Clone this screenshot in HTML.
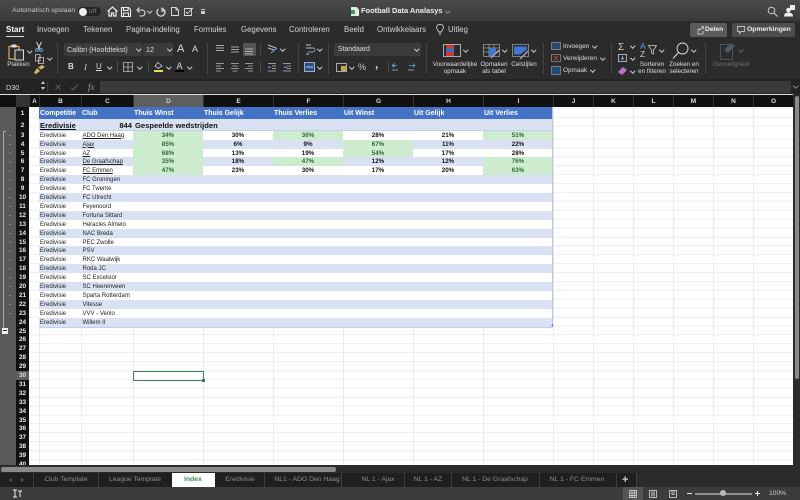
<!DOCTYPE html>
<html lang="nl"><head><meta charset="utf-8"><title>Football Data Analasys</title>
<style>
html,body{margin:0;padding:0;width:800px;height:500px;overflow:hidden;background:#2b2b2b}
#p{position:relative;width:800px;height:500px;overflow:hidden;font-family:"Liberation Sans",sans-serif;filter:blur(.35px)}
.a{position:absolute;white-space:nowrap}
.t{position:absolute;white-space:nowrap;color:#ddd;font-size:7px;line-height:10px}
.tab{position:absolute;top:24.5px;color:#d5d5d5;font-size:7.8px;line-height:10px;white-space:nowrap}
.sep{position:absolute;top:43px;width:1px;height:31px;background:#444}
.rb{position:absolute;font-size:6.3px;line-height:8px;color:#ddd;text-align:center;white-space:nowrap;transform:translateX(-50%)}
svg{position:absolute;overflow:visible}
.ch{position:absolute;width:2.5px;height:2.5px;border-right:1px solid #ccc;border-bottom:1px solid #ccc;transform:rotate(45deg)}
.ch.d{border-color:#666}
#sheet{position:absolute;left:0;top:94px;width:793px;height:371px;background:#fff;overflow:hidden;border-top:1px solid #ddd;box-sizing:border-box}
#outline{position:absolute;left:0;top:0;width:16px;height:371px;background:#5a5a5a}
#rows{position:absolute;left:16px;top:12px;width:777px;height:360px;background:#fff}
#strip{position:absolute;left:0;top:0;width:13px;height:360px;background:#111}
.v{position:absolute;top:0;width:1px;height:360px;background:#ececec}
#gl{position:absolute;left:13px;top:0;width:764px;height:360px;background:repeating-linear-gradient(to bottom,transparent 0,transparent 7.9px,#eee 7.9px,#eee 8.9px);background-position:0 23.7px}
.r{position:absolute;left:0;width:537px;height:8.9px;display:grid;grid-template-columns:13px 10px 42px 52px repeat(6,70px);font-size:6px;line-height:10px;color:#222}
.r span{overflow:visible;white-space:nowrap;display:block;height:100%}
.r span:first-child{background:transparent;color:#eee;font-weight:bold;text-align:center;font-size:6.4px}
.r span:nth-child(3){padding-left:1px}
.r span:nth-child(4){padding-left:1.5px}
.b>span:nth-child(n+3){background:#d9e1f2;box-shadow:inset 0 -1px 0 #c0cfe9}
.w>span:nth-child(n+3){background:#fff;box-shadow:inset 0 -1px 0 #c0cfe9}
.r span.n{text-align:center;font-weight:bold;color:#111;font-size:6.2px}
.r span.g{text-align:center;color:#2f6b2f;font-weight:bold;background:#cdeccf!important;font-size:6.2px}
.r u{color:#222}
.h1{position:absolute;top:0;color:#fff;font-size:7px;font-weight:bold;line-height:13.5px}
.h2{position:absolute;top:11.7px;color:#111;font-size:7.6px;font-weight:bold;line-height:13.5px}
#hd{position:absolute;left:0;top:0;width:793px;height:12px;background:#111}
.hc{position:absolute;top:0;height:12px;background:#111;color:#ddd;font-size:6.5px;font-weight:bold;line-height:13.5px;text-align:center;border-left:1px solid #333;box-sizing:border-box}
.stab{position:absolute;top:474px;color:#8c8c8c;font-size:6.8px;line-height:11px;white-space:nowrap;transform:translateX(-50%)}
.ss{position:absolute;top:473px;width:1px;height:14px;background:#3e3e3e}
</style></head><body><div id="p">
<!-- title bar -->
<div class="a" style="left:0;top:0;width:800px;height:21px;background:linear-gradient(#4a4a4a,#3a3a3a)"></div>
<div class="t" style="left:12px;top:6px;font-size:6.8px;color:#c8c8c8">Automatisch opslaan</div>
<div class="a" style="left:78px;top:7px;width:23px;height:9px;border-radius:5px;background:#242424"></div>
<div class="a" style="left:79px;top:7.5px;width:8px;height:8px;border-radius:50%;background:#eee"></div>
<div class="t" style="left:89px;top:6.500px;font-size:5px;color:#999">UIT</div>
<svg style="left:107px;top:6px" width="11" height="11" viewBox="0 0 11 11"><path d="M.5 5.500 5.500 1l5 4.500M2 4.500V10h2.500V7h2v3H9V4.500" fill="none" stroke="#eee" stroke-width="1.200"/></svg>
<svg style="left:121px;top:6.500px" width="10" height="10" viewBox="0 0 10 10"><path d="M.5.500h7l2 2v7H.5zM2.500.500v3H7v-3M2.500 9.500V6h5v3.500" fill="none" stroke="#eee" stroke-width="1.100"/></svg>
<svg style="left:136px;top:6.500px" width="10" height="10" viewBox="0 0 10 10"><path d="M3.500.5 1 3l2.500 2.500M1 3h5a3 3 0 0 1 0 6H3.500" fill="none" stroke="#ddd" stroke-width="1.100"/></svg>
<div class="ch" style="left:148px;top:9px"></div>
<svg style="left:156px;top:6.500px" width="10" height="10" viewBox="0 0 10 10"><path d="M6 .5V4h3.500M6.500 1.500a4 4 0 1 1-4 .5" fill="none" stroke="#ddd" stroke-width="1.200"/></svg>
<svg style="left:171px;top:7px" width="8" height="9" viewBox="0 0 8 9"><path d="M.5.500H5L7.500 3v5.500h-7zM5 .5V3h2.500" fill="none" stroke="#ddd" stroke-width=".9"/></svg>
<svg style="left:184px;top:7px" width="10" height="9" viewBox="0 0 10 9"><path d="M.5 1.500h7v7h-7zM2 5l1.500 1.500L9 .8" fill="none" stroke="#ddd" stroke-width=".9"/></svg>
<div class="a" style="left:201px;top:9px;width:4px;height:1px;background:#ccc"></div>
<div class="a" style="left:201px;top:11px;width:4px;height:3px;background:#ccc"></div>
<svg style="left:351px;top:7px" width="8" height="9" viewBox="0 0 8 9"><path d="M0 0h5.500L8 2.500V9H0z" fill="#e6e6e6"/><rect x="0" y="3" width="4" height="4" fill="#3d9a5f"/></svg>
<div class="t" style="left:361px;top:6px;color:#eee;font-weight:bold;font-size:7.450px">Football Data Analasys</div>
<div class="ch d" style="left:446px;top:9px;border-color:#888"></div>
<svg style="left:767px;top:6px" width="11" height="11" viewBox="0 0 11 11"><circle cx="4.500" cy="4.500" r="3.300" fill="none" stroke="#ccc"/><path d="M7 7l3.500 3.500" stroke="#ccc" stroke-width="1.100"/></svg>
<svg style="left:784px;top:5px" width="12" height="12" viewBox="0 0 12 12"><rect x="6" y="0" width="5" height="5" fill="#eee"/><circle cx="4.500" cy="5" r="2.300" fill="#eee"/><path d="M0 11.500c0-3 2-4 4.500-4s4.500 1 4.500 4z" fill="#eee"/></svg>
<!-- tabs -->
<div class="a" style="left:0;top:21px;width:800px;height:59px;background:#2b2b2b"></div>
<div class="tab" style="left:6px;color:#fff;font-weight:bold;font-size:8px">Start</div>
<div class="a" style="left:6px;top:35.500px;width:18px;height:1.300px;background:#ddd"></div>
<div class="tab" style="left:37px">Invoegen</div>
<div class="tab" style="left:83px">Tekenen</div>
<div class="tab" style="left:126px">Pagina-indeling</div>
<div class="tab" style="left:194px">Formules</div>
<div class="tab" style="left:241px">Gegevens</div>
<div class="tab" style="left:289px">Controleren</div>
<div class="tab" style="left:344px">Beeld</div>
<div class="tab" style="left:377px">Ontwikkelaars</div>
<svg style="left:436px;top:24px" width="8" height="11" viewBox="0 0 8 11"><path d="M2.500 8C2.500 6 .5 5.500.5 3.500a3.500 3.200 0 0 1 7 0C7.500 5.500 5.500 6 5.500 8zM3 10h2" fill="none" stroke="#ccc" stroke-width=".9"/></svg>
<div class="tab" style="left:448px">Uitleg</div>
<div class="a" style="left:690px;top:23px;width:37px;height:14px;background:#5b5b5b;border-radius:2px"></div>
<svg style="left:695px;top:26px" width="9" height="8" viewBox="0 0 9 8"><path d="M6 3H3v5h5V5M4.500 4.500 8.500.8M6 .7h2.700v2.500" fill="none" stroke="#ddd" stroke-width=".7"/></svg>
<div class="t" style="left:705px;top:25px;color:#eee;font-weight:bold;font-size:6.700px">Delen</div>
<div class="a" style="left:732px;top:23px;width:63px;height:14px;background:#4d4d4d;border-radius:2px"></div>
<svg style="left:737px;top:26px" width="8" height="8" viewBox="0 0 8 8"><path d="M.5.500h7v5H4L2.500 7.500v-2h-2z" fill="none" stroke="#ddd" stroke-width=".7"/></svg>
<div class="t" style="left:747px;top:25px;color:#eee;font-weight:bold;font-size:6.800px">Opmerkingen</div>
<!-- ribbon: clipboard -->
<svg style="left:8px;top:43px" width="19" height="18" viewBox="0 0 19 18"><path d="M1 3.500h10V16H1z" fill="none" stroke="#d9a860" stroke-width="1.200"/><rect x="3.500" y="1.500" width="5" height="3" fill="#ddd"/><rect x="7" y="7" width="8.500" height="10" fill="#333" stroke="#ddd"/></svg>
<div class="ch" style="left:28px;top:49px"></div>
<div class="rb" style="left:18.500px;top:61px">Plakken</div>
<svg style="left:35px;top:42px" width="8" height="10" viewBox="0 0 8 10"><path d="M1.500 0 5 7M6.500 0 3 7" stroke="#ddd"/><circle cx="2" cy="8" r="1.400" fill="none" stroke="#6ea0d8"/><circle cx="6" cy="8" r="1.400" fill="none" stroke="#6ea0d8"/></svg>
<svg style="left:35px;top:54px" width="9" height="10" viewBox="0 0 9 10"><path d="M.5.500H5V7H.5zM3.500 3.500h5v6h-5z" fill="#2b2b2b" stroke="#ccc" stroke-width=".8"/></svg>
<div class="ch" style="left:47.500px;top:56px"></div>
<svg style="left:34px;top:65px" width="11" height="9" viewBox="0 0 11 9"><path d="M0 8 3 3l3 3-4 3zM4 2.500 8 0l3 2-4 2.500z" fill="#d9b45c"/></svg>
<div class="sep" style="left:57px"></div>
<!-- font -->
<div class="a" style="left:64px;top:43px;width:78px;height:13px;background:#3b3b3b;border-radius:2px"></div>
<div class="t" style="left:67px;top:45px;font-size:7.100px">Calibri (Hoofdtekst)</div>
<div class="ch" style="left:137px;top:47px"></div>
<div class="a" style="left:143px;top:43px;width:30px;height:13px;background:#3b3b3b;border-radius:2px"></div>
<div class="t" style="left:146px;top:45px;font-size:7.100px">12</div>
<div class="ch" style="left:168px;top:47px"></div>
<div class="t" style="left:177px;top:43px;font-size:11px;line-height:12px">A</div>
<div class="t" style="left:192px;top:44px;font-size:9px;line-height:11px">A</div>
<div class="t" style="left:68px;top:62px;font-weight:bold;font-size:8px">B</div>
<div class="t" style="left:84px;top:62px;font-style:italic;font-family:'Liberation Serif',serif;font-size:8.500px">I</div>
<div class="t" style="left:96px;top:62px;text-decoration:underline;font-size:8px">U</div>
<div class="ch" style="left:108px;top:65px"></div>
<div class="a" style="left:117px;top:61px;width:1px;height:11px;background:#4a4a4a"></div>
<svg style="left:123px;top:62px" width="10" height="10" viewBox="0 0 10 10"><path d="M.5.500h9v9h-9zM5 .5v9M.5 5h9" fill="none" stroke="#bbb" stroke-width=".8"/></svg>
<div class="ch" style="left:137.500px;top:65px"></div>
<div class="a" style="left:148px;top:61px;width:1px;height:11px;background:#4a4a4a"></div>
<svg style="left:154px;top:62px" width="9" height="7" viewBox="0 0 9 7"><path d="M4 .5 8 4 4.500 6.500 1 4z" fill="none" stroke="#ccc" stroke-width=".8"/></svg>
<div class="a" style="left:154px;top:69.500px;width:9px;height:2.500px;background:#f4d64a"></div>
<div class="ch" style="left:166.500px;top:65px"></div>
<div class="t" style="left:176.500px;top:60.500px;font-size:9px">A</div>
<div class="a" style="left:175px;top:70px;width:9px;height:2px;background:#000"></div>
<div class="ch" style="left:188px;top:65px"></div>
<div class="sep" style="left:207px"></div>
<!-- alignment -->
<div class="a" style="left:243px;top:43px;width:13px;height:13px;background:#555;border-radius:1px"></div>
<svg style="left:216px;top:45px" width="40" height="10" viewBox="0 0 40 10"><path d="M0 .5h8M0 3h8M0 5.500h8M15 2h8M15 4.500h8M15 7h8M29 4h8M29 6.500h8M29 9h8" stroke="#ccc" stroke-width=".8"/></svg>
<svg style="left:216px;top:63px" width="40" height="9" viewBox="0 0 40 9"><path d="M0 .5h8M0 3h5M0 5.500h8M0 8h5M15 .5h8M16.500 3h5M15 5.500h8M16.500 8h5M29 .5h8M32 3h5M29 5.500h8M32 8h5" stroke="#bbb" stroke-width=".8"/></svg>
<div class="a" style="left:260px;top:44px;width:1px;height:11px;background:#4a4a4a"></div>
<svg style="left:267px;top:44px" width="11" height="11" viewBox="0 0 11 11"><path d="M1 1l8 3M1 4l6 2" stroke="#bbb"/><path d="M4 9l6-5" stroke="#6ea0d8"/></svg>
<div class="ch" style="left:281px;top:47px"></div>
<div class="a" style="left:260px;top:62px;width:1px;height:11px;background:#4a4a4a"></div>
<svg style="left:268px;top:63px" width="24" height="9" viewBox="0 0 24 9"><path d="M0 .5h8M4 3h4M4 5.500h4M0 8h8M15 .5h8M19 3h4M19 5.500h4M15 8h8" stroke="#bbb" stroke-width=".8"/><path d="M0 4.300h3M16 4.300h3" stroke="#6ea0d8" stroke-width="1.200"/></svg>
<div class="sep" style="left:298px"></div>
<svg style="left:305px;top:44px" width="10" height="11" viewBox="0 0 10 11"><path d="M1 1h5M1 4h7" stroke="#bbb"/><path d="M8 4a2 2 0 0 1 0 4H3" fill="none" stroke="#6ea0d8"/><path d="M1 10h3" stroke="#bbb"/></svg>
<div class="ch" style="left:318px;top:47px"></div>
<svg style="left:304px;top:62px" width="11" height="10" viewBox="0 0 11 10"><rect x=".5" y=".5" width="10" height="9" fill="#29537f" stroke="#aac"/><path d="M2 5h7" stroke="#bcd"/></svg>
<div class="ch" style="left:318px;top:65px"></div>
<div class="sep" style="left:328px"></div>
<!-- number -->
<div class="a" style="left:334px;top:43px;width:87px;height:13px;background:#3b3b3b;border-radius:2px"></div>
<div class="t" style="left:338px;top:45px;font-size:6.900px">Standaard</div>
<div class="ch" style="left:415px;top:47px"></div>
<svg style="left:336px;top:63px" width="11" height="9" viewBox="0 0 11 9"><rect x=".5" y=".5" width="10" height="8" fill="none" stroke="#aaa"/><rect x="5" y="3" width="5" height="5" fill="#caa34e"/></svg>
<div class="ch" style="left:350px;top:65px"></div>
<div class="t" style="left:358px;top:62px;font-size:9px;color:#ccc">%</div>
<div class="t" style="left:375px;top:59px;font-size:12px;font-weight:bold">,</div>
<div class="a" style="left:388px;top:61px;width:1px;height:11px;background:#4a4a4a"></div>
<svg style="left:391px;top:63px" width="27" height="9" viewBox="0 0 27 9"><path d="M1 2.500 4 .5M1 2.500l3 2M1 2.500h5" stroke="#6ea0d8" fill="none" stroke-width=".8"/><path d="M1 7h6M17 7h6" stroke="#bbb" stroke-width=".8"/><path d="M18 2.500h6M24 2.500l-2-2M24 2.500l-2 2" stroke="#6ea0d8" fill="none" stroke-width=".8"/></svg>
<div class="sep" style="left:426px"></div>
<!-- styles -->
<svg style="left:443px;top:44px" width="18" height="13" viewBox="0 0 18 13"><rect x=".5" y=".5" width="17" height="12" fill="none" stroke="#aaa"/><rect x="3" y="1" width="8" height="3.500" fill="#c93a35"/><rect x="3" y="4.500" width="8" height="3.500" fill="#3a6fc5"/><rect x="3" y="8" width="8" height="4" fill="#c93a35"/></svg>
<div class="ch" style="left:464px;top:48px"></div>
<div class="rb" style="left:455px;top:61px">Voorwaardelijke</div>
<div class="rb" style="left:455px;top:68px">opmaak</div>
<svg style="left:483px;top:44px" width="17" height="16" viewBox="0 0 17 16"><path d="M.5.500h16v12H.5zM.5 4h16M.5 8h16M6 .5v12M11 .5v12" fill="none" stroke="#999" stroke-width=".8"/><path d="M6 4h7v5l-4 3H6z" fill="#3f79d0"/><path d="M8 14 16 6" stroke="#9ab" stroke-width="1.500"/></svg>
<div class="ch" style="left:503px;top:48px"></div>
<div class="rb" style="left:494px;top:61px">Opmaken</div>
<div class="rb" style="left:494px;top:68px">als tabel</div>
<svg style="left:512px;top:44px" width="18" height="16" viewBox="0 0 18 16"><path d="M.5.500h16v12H.5z" fill="none" stroke="#999" stroke-width=".8"/><path d="M2 2.500h13v3l-7 5H2z" fill="#3f79d0"/><path d="M8 15l8-8" stroke="#9ab" stroke-width="1.500"/></svg>
<div class="ch" style="left:532px;top:48px"></div>
<div class="rb" style="left:524px;top:61px">Celstijlen</div>
<div class="sep" style="left:543px"></div>
<!-- cells -->
<svg style="left:551px;top:42px" width="10" height="34" viewBox="0 0 10 34"><rect x=".5" y=".5" width="9" height="7" fill="#234a75" stroke="#999" stroke-width=".7"/><rect x=".5" y="12.500" width="9" height="7" fill="none" stroke="#999" stroke-width=".7"/><path d="M3 14l4 4M7 14l-4 4" stroke="#d44" stroke-width=".8"/><rect x=".5" y="24.500" width="9" height="8" fill="#234a75" stroke="#999" stroke-width=".7"/></svg>
<div class="t" style="left:563px;top:41.500px;font-size:6.400px">Invoegen</div><div class="ch" style="left:593px;top:44px"></div>
<div class="t" style="left:563px;top:53.500px;font-size:6.500px">Verwijderen</div><div class="ch" style="left:600.500px;top:56px"></div>
<div class="t" style="left:563px;top:65.500px;font-size:6.400px">Opmaak</div><div class="ch" style="left:591px;top:68px"></div>
<div class="sep" style="left:611px"></div>
<!-- editing -->
<div class="t" style="left:618px;top:43px;font-size:10px;color:#ccc">Σ</div><div class="ch" style="left:631px;top:44px"></div>
<svg style="left:618px;top:54px" width="9" height="8" viewBox="0 0 9 8"><rect x=".5" y=".5" width="8" height="7" fill="none" stroke="#aaa"/><path d="M4.500 2v3M3 4l1.500 1.500L6 4" stroke="#6ea0d8" fill="none"/></svg><div class="ch" style="left:631px;top:56px"></div>
<svg style="left:618px;top:67px" width="9" height="8" viewBox="0 0 9 8"><path d="M0 5 5 0l4 3-5 5z" fill="#b873c7"/></svg><div class="ch" style="left:631px;top:69px"></div>
<div class="t" style="left:640px;top:42px;font-size:8.500px;line-height:9px;color:#5f97db">A</div>
<div class="t" style="left:640px;top:50px;font-size:8.500px;line-height:9px;color:#ccc">Z</div>
<svg style="left:648px;top:45px" width="9" height="10" viewBox="0 0 9 10"><path d="M.5.500h8L5.500 5v4l-2-1V5z" fill="none" stroke="#ccc" stroke-width=".8"/></svg>
<div class="ch" style="left:660px;top:48px"></div>
<div class="rb" style="left:652px;top:61px">Sorteren</div>
<div class="rb" style="left:652px;top:68px">en filteren</div>
<svg style="left:672px;top:42px" width="17" height="18" viewBox="0 0 17 18"><circle cx="10.500" cy="6.500" r="5.500" fill="none" stroke="#ddd" stroke-width=".9"/><path d="M6.500 10.500 1 16.500" stroke="#ddd"/></svg>
<div class="ch" style="left:692px;top:48px"></div>
<div class="rb" style="left:684px;top:61px">Zoeken en</div>
<div class="rb" style="left:684px;top:68px">selecteren</div>
<div class="sep" style="left:705px"></div>
<svg style="left:720px;top:42px" width="19" height="18" viewBox="0 0 19 18"><path d="M.5 2.500h9l3 3v12H.5z" fill="none" stroke="#45545f"/><path d="M4 8l7-7 4 3-7 7z" fill="#4a5a66"/></svg>
<div class="ch d" style="left:739px;top:48px"></div>
<div class="rb" style="left:731px;top:61px;color:#6f6f6f">Gevoeligheid</div>
<!-- formula bar -->
<div class="a" style="left:0;top:79px;width:800px;height:15px;background:#232323"></div>
<div class="t" style="left:6px;top:82.500px;font-size:7.200px;color:#ddd">D30</div>
<div class="a" style="left:40.500px;top:81px;width:0;height:0;border:2.500px solid transparent;border-bottom:3px solid #ccc;border-top:0"></div>
<div class="a" style="left:40.500px;top:87px;width:0;height:0;border:2.500px solid transparent;border-top:3px solid #ccc;border-bottom:0"></div>
<div class="a" style="left:47px;top:81px;width:1px;height:11px;background:#3a3a3a"></div>
<svg style="left:55px;top:84px" width="30" height="7" viewBox="0 0 30 7"><path d="M.5.500l5 5M5.500.500l-5 5" stroke="#5c5c5c"/><path d="M16 3.500l2 2.500 5-5.500" stroke="#5c5c5c" fill="none"/></svg>
<div class="t" style="left:88px;top:82px;font-family:'Liberation Serif',serif;font-style:italic;font-size:9px;color:#999">fx</div>
<div class="a" style="left:100px;top:81px;width:691px;height:11.500px;background:#3a3a3a"></div>
<div class="ch" style="left:794px;top:84px;border-color:#888"></div>
<!-- sheet -->
<div id="sheet">
<div id="outline">
<div class="a" style="left:1px;top:4px;width:6px;height:6.500px;background:#cfcfcf;color:#333;font-size:5.500px;line-height:6.500px;text-align:center">1</div>
<div class="a" style="left:8px;top:4px;width:6px;height:6.500px;background:#cfcfcf;color:#333;font-size:5.500px;line-height:6.500px;text-align:center">2</div>
<div class="a" style="left:3px;top:36px;width:2px;height:197px;border-left:1px solid #aaa;border-top:1px solid #aaa"></div>
<div class="a" style="left:9px;top:36px;width:2px;height:191px;background:repeating-linear-gradient(to bottom,transparent 0,transparent 3.900px,#8c8c8c 3.900px,#8c8c8c 4.900px,transparent 4.900px,transparent 8.900px)"></div>
<div class="a" style="left:2px;top:233px;width:6px;height:5.500px;background:#eee"></div>
<div class="a" style="left:3px;top:235.300px;width:4px;height:1px;background:#333"></div>
</div>
<div id="hd">
<div class="a" style="left:16px;top:0;width:13px;height:12px;background:#333"></div>
<div class="hc" style="left:29px;width:10px">A</div>
<div class="hc" style="left:39px;width:42px">B</div>
<div class="hc" style="left:81px;width:52px">C</div>
<div class="hc" style="left:133px;width:70px;background:#5f5f5f;color:#ccc">D</div>
<div class="hc" style="left:203px;width:70px">E</div>
<div class="hc" style="left:273px;width:70px">F</div>
<div class="hc" style="left:343px;width:70px">G</div>
<div class="hc" style="left:413px;width:70px">H</div>
<div class="hc" style="left:483px;width:70px">I</div>
<div class="hc" style="left:553px;width:40px">J</div>
<div class="hc" style="left:593px;width:40px">K</div>
<div class="hc" style="left:633px;width:40px">L</div>
<div class="hc" style="left:673px;width:40px">M</div>
<div class="hc" style="left:713px;width:40px">N</div>
<div class="hc" style="left:753px;width:40px">O</div>
</div>
<div id="rows">
<div id="gl"></div>
<div id="strip"></div>
<div class="a" style="left:0;top:264px;width:13px;height:8.900px;background:#5f5f5f"></div>
<i class="v" style="left:23px"></i><i class="v" style="left:65px"></i><i class="v" style="left:117px"></i><i class="v" style="left:187px"></i><i class="v" style="left:257px"></i><i class="v" style="left:327px"></i><i class="v" style="left:397px"></i><i class="v" style="left:467px"></i><i class="v" style="left:537px"></i><i class="v" style="left:577px"></i><i class="v" style="left:617px"></i><i class="v" style="left:657px"></i><i class="v" style="left:697px"></i><i class="v" style="left:737px"></i>
<!-- row 1 -->
<div class="a" style="left:0;top:0;width:13px;height:11.700px;color:#eee;font-size:6.400px;font-weight:bold;text-align:center;line-height:13.500px">1</div>
<div class="a" style="left:23px;top:0;width:514px;height:11.700px;background:#4472c4"></div>
<div class="h1" style="left:24px">Competitie</div>
<div class="h1" style="left:66px">Club</div>
<div class="h1" style="left:118px">Thuis Winst</div>
<div class="h1" style="left:188px">Thuis Gelijk</div>
<div class="h1" style="left:258px">Thuis Verlies</div>
<div class="h1" style="left:328px">Uit Winst</div>
<div class="h1" style="left:398px">Uit Gelijk</div>
<div class="h1" style="left:468px">Uit Verlies</div>
<!-- row 2 -->
<div class="a" style="left:0;top:11.700px;width:13px;height:12px;color:#eee;font-size:6.400px;font-weight:bold;text-align:center;line-height:13.500px">2</div>
<div class="a" style="left:23px;top:11.700px;width:514px;height:12px;background:#d9e1f2;box-shadow:inset 0 -1px 0 #c0cfe9"></div>
<div class="h2" style="left:24px;text-decoration:underline">Eredivisie</div>
<div class="h2" style="left:84px;width:32px;text-align:right">844</div>
<div class="h2" style="left:119px">Gespeelde wedstrijden</div>
<!-- data -->
<div class="r w" style="top:23.700px"><span>3</span><span></span><span>Eredivisie</span><span><u>ADO Den Haag</u></span><span class="g">34%</span><span class="n">30%</span><span class="g">36%</span><span class="n">28%</span><span class="n">21%</span><span class="g">51%</span></div>
<div class="r b" style="top:32.600px"><span>4</span><span></span><span>Eredivisie</span><span><u>Ajax</u></span><span class="g">85%</span><span class="n">6%</span><span class="n">9%</span><span class="g">67%</span><span class="n">11%</span><span class="n">22%</span></div>
<div class="r w" style="top:41.500px"><span>5</span><span></span><span>Eredivisie</span><span><u>AZ</u></span><span class="g">68%</span><span class="n">13%</span><span class="n">19%</span><span class="g">54%</span><span class="n">17%</span><span class="n">28%</span></div>
<div class="r b" style="top:50.400px"><span>6</span><span></span><span>Eredivisie</span><span><u>De Graafschap</u></span><span class="g">35%</span><span class="n">18%</span><span class="g">47%</span><span class="n">12%</span><span class="n">12%</span><span class="g">76%</span></div>
<div class="r w" style="top:59.300px"><span>7</span><span></span><span>Eredivisie</span><span><u>FC Emmen</u></span><span class="g">47%</span><span class="n">23%</span><span class="n">30%</span><span class="n">17%</span><span class="n">20%</span><span class="g">63%</span></div>
<div class="r b" style="top:68.200px"><span>8</span><span></span><span>Eredivisie</span><span>FC Groningen</span><span></span><span></span><span></span><span></span><span></span><span></span></div>
<div class="r w" style="top:77.100px"><span>9</span><span></span><span>Eredivisie</span><span>FC Twente</span><span></span><span></span><span></span><span></span><span></span><span></span></div>
<div class="r b" style="top:86px"><span>10</span><span></span><span>Eredivisie</span><span>FC Utrecht</span><span></span><span></span><span></span><span></span><span></span><span></span></div>
<div class="r w" style="top:94.900px"><span>11</span><span></span><span>Eredivisie</span><span>Feyenoord</span><span></span><span></span><span></span><span></span><span></span><span></span></div>
<div class="r b" style="top:103.800px"><span>12</span><span></span><span>Eredivisie</span><span>Fortuna Sittard</span><span></span><span></span><span></span><span></span><span></span><span></span></div>
<div class="r w" style="top:112.700px"><span>13</span><span></span><span>Eredivisie</span><span>Heracles Almelo</span><span></span><span></span><span></span><span></span><span></span><span></span></div>
<div class="r b" style="top:121.600px"><span>14</span><span></span><span>Eredivisie</span><span>NAC Breda</span><span></span><span></span><span></span><span></span><span></span><span></span></div>
<div class="r w" style="top:130.500px"><span>15</span><span></span><span>Eredivisie</span><span>PEC Zwolle</span><span></span><span></span><span></span><span></span><span></span><span></span></div>
<div class="r b" style="top:139.400px"><span>16</span><span></span><span>Eredivisie</span><span>PSV</span><span></span><span></span><span></span><span></span><span></span><span></span></div>
<div class="r w" style="top:148.300px"><span>17</span><span></span><span>Eredivisie</span><span>RKC Waalwijk</span><span></span><span></span><span></span><span></span><span></span><span></span></div>
<div class="r b" style="top:157.200px"><span>18</span><span></span><span>Eredivisie</span><span>Roda JC</span><span></span><span></span><span></span><span></span><span></span><span></span></div>
<div class="r w" style="top:166.100px"><span>19</span><span></span><span>Eredivisie</span><span>SC Excelsior</span><span></span><span></span><span></span><span></span><span></span><span></span></div>
<div class="r b" style="top:175px"><span>20</span><span></span><span>Eredivisie</span><span>SC Heerenveen</span><span></span><span></span><span></span><span></span><span></span><span></span></div>
<div class="r w" style="top:183.900px"><span>21</span><span></span><span>Eredivisie</span><span>Sparta Rotterdam</span><span></span><span></span><span></span><span></span><span></span><span></span></div>
<div class="r b" style="top:192.800px"><span>22</span><span></span><span>Eredivisie</span><span>Vitesse</span><span></span><span></span><span></span><span></span><span></span><span></span></div>
<div class="r w" style="top:201.700px"><span>23</span><span></span><span>Eredivisie</span><span>VVV - Venlo</span><span></span><span></span><span></span><span></span><span></span><span></span></div>
<div class="r b" style="top:210.600px"><span>24</span><span></span><span>Eredivisie</span><span>Willem II</span><span></span><span></span><span></span><span></span><span></span><span></span></div>
<div class="a" style="left:23px;top:0;width:514px;height:219.500px;box-sizing:border-box;border-right:1px solid #b4c6e7"></div>
<div class="a" style="left:534.500px;top:216.500px;width:0;height:0;border-left:2.500px solid transparent;border-bottom:2.500px solid #2f5fb0"></div>
<div class="r" style="top:219.500px;width:13px"><span>25</span></div>
<div class="r" style="top:228.400px;width:13px"><span>26</span></div>
<div class="r" style="top:237.300px;width:13px"><span>27</span></div>
<div class="r" style="top:246.200px;width:13px"><span>28</span></div>
<div class="r" style="top:255.100px;width:13px"><span>29</span></div>
<div class="r" style="top:264px;width:13px"><span style="color:#ddd">30</span></div>
<div class="r" style="top:272.900px;width:13px"><span>31</span></div>
<div class="r" style="top:281.800px;width:13px"><span>32</span></div>
<div class="r" style="top:290.700px;width:13px"><span>33</span></div>
<div class="r" style="top:299.600px;width:13px"><span>34</span></div>
<div class="r" style="top:308.500px;width:13px"><span>35</span></div>
<div class="r" style="top:317.400px;width:13px"><span>36</span></div>
<div class="r" style="top:326.300px;width:13px"><span>37</span></div>
<div class="r" style="top:335.200px;width:13px"><span>38</span></div>
<div class="r" style="top:344.100px;width:13px"><span>39</span></div>
<div class="r" style="top:353px;width:13px"><span>40</span></div>
<div class="a" style="left:116.500px;top:263.500px;width:71px;height:10px;border:1px solid #3f7d4c;box-sizing:border-box"></div>
<div class="a" style="left:185.500px;top:271.500px;width:3px;height:3px;background:#3f7d4c"></div>
</div>
</div>
<!-- right scrollbar -->
<div class="a" style="left:793px;top:94px;width:7px;height:379px;background:#2b2b2b"></div>
<div class="a" style="left:794.500px;top:96px;width:4px;height:283px;background:#8a8a8a;border-radius:2px"></div>
<!-- horizontal scrollbar -->
<div class="a" style="left:0;top:465px;width:793px;height:8px;background:#2b2b2b"></div>
<div class="a" style="left:1px;top:467px;width:335px;height:4.500px;background:#8a8a8a;border-radius:2px"></div>
<!-- sheet tabs -->
<div class="a" style="left:0;top:473px;width:636px;height:14px;background:#1f1f1f"></div>
<div class="a" style="left:636px;top:473px;width:164px;height:14px;background:#2b2b2b"></div>
<div class="a" style="left:8px;top:477.500px;width:0;height:0;border:2.500px solid transparent;border-right:4px solid #4d4d4d;border-left:0"></div>
<div class="a" style="left:21px;top:477.500px;width:0;height:0;border:2.500px solid transparent;border-left:4px solid #4d4d4d;border-right:0"></div>
<div class="ss" style="left:33px"></div>
<div class="stab" style="left:66px">Club Template</div><div class="ss" style="left:98px"></div>
<div class="stab" style="left:135px">League Template</div>
<div class="a" style="left:172px;top:473px;width:43px;height:14px;background:#fff"></div>
<div class="stab" style="left:193px;color:#3f8a53;font-weight:bold">Index</div>
<div class="stab" style="left:240px">Eredivisie</div><div class="ss" style="left:264px"></div>
<div class="stab" style="left:307px">NL1 - ADO Den Haag</div><div class="ss" style="left:341px"></div>
<div class="stab" style="left:378px">NL 1 - Ajax</div><div class="ss" style="left:404px"></div>
<div class="stab" style="left:428px">NL 1 - AZ</div><div class="ss" style="left:451px"></div>
<div class="stab" style="left:495px">NL 1 - De Graafschap</div><div class="ss" style="left:539px"></div>
<div class="stab" style="left:577px">NL 1 - FC Emmen</div><div class="ss" style="left:616px"></div>
<div class="a" style="left:622px;top:475px;font-size:11px;line-height:10px;color:#ccc;font-weight:bold">+</div><div class="ss" style="left:636px"></div>
<!-- status bar -->
<div class="a" style="left:0;top:487px;width:800px;height:13px;background:#3c3c3c"></div>
<svg style="left:13px;top:489px" width="9" height="9" viewBox="0 0 9 9"><path d="M0 1h4M2 1v7M0 8h4M5 2h4M7 2v6" stroke="#eee" fill="none" stroke-width="1"/></svg>
<div class="a" style="left:623px;top:487px;width:20px;height:13px;background:#555"></div>
<svg style="left:629px;top:490px" width="8" height="8" viewBox="0 0 8 8"><path d="M.5.500h7v7h-7zM.5 3h7M.5 5.500h7M3 .5v7M5.500 .5v7" fill="none" stroke="#ddd" stroke-width=".7"/></svg>
<svg style="left:649px;top:490px" width="8" height="8" viewBox="0 0 8 8"><rect x=".5" y=".5" width="7" height="7" fill="none" stroke="#bbb"/><rect x="2" y="1.500" width="4" height="5" fill="#888"/></svg>
<svg style="left:669px;top:490px" width="8" height="8" viewBox="0 0 8 8"><path d="M.5 7.500V.5h7v7zM3 .5v4h2V.5" fill="none" stroke="#ddd" stroke-width=".8"/></svg>
<div class="a" style="left:687px;top:493px;width:5px;height:1.200px;background:#eee"></div>
<div class="a" style="left:695px;top:493px;width:57px;height:1.500px;background:#8e8e8e"></div>
<div class="a" style="left:720px;top:490px;width:6px;height:6px;border-radius:50%;background:#bbb"></div>
<div class="a" style="left:755px;top:493px;width:5px;height:1.200px;background:#eee"></div>
<div class="a" style="left:757px;top:491px;width:1.200px;height:5px;background:#eee"></div>
<div class="t" style="left:769px;top:489px;font-size:6.700px;color:#ccc">100%</div>
</div></body></html>
